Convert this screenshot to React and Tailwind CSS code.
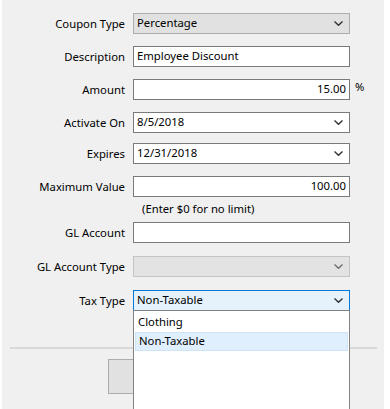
import React from "react";

const font = { fontFamily: '"Noto Sans", "Open Sans", sans-serif' };

function Chevron({ color = "#333" }) {
  return (
    <svg width="9" height="5" viewBox="0 0 9 5" className="shrink-0">
      <path d="M0.5 0.5 L4.5 4.3 L8.5 0.5" fill="none" stroke={color} strokeWidth="1.4" />
    </svg>
  );
}

function Row({ label, mt, children }) {
  return (
    <div className={`flex items-center ${mt}`}>
      <div className="w-[123px] text-right text-[11.3px] text-black leading-none">{label}</div>
      <div className="ml-[8px] flex items-center">{children}</div>
    </div>
  );
}

function TextBox({ value, right }) {
  return (
    <div
      className={`w-[217px] h-[21px] bg-white border border-[#7a7a7a] flex items-center px-[3px] text-[11.3px] text-black ${
        right ? "justify-end" : ""
      }`}
    >
      {value}
    </div>
  );
}

function Combo({ value, variant }) {
  const cls =
    variant === "gray"
      ? "bg-[#e1e1e1] border-[#adadad]"
      : variant === "disabled"
      ? "bg-[#e3e3e3] border-[#c4c4c4]"
      : variant === "focus"
      ? "bg-[#e5f1fb] border-[#0078d7]"
      : "bg-white border-[#7a7a7a]";
  return (
    <div className={`w-[217px] h-[21px] border ${cls} flex items-center justify-between pl-[3px] pr-[6px] text-[11.3px] text-black`}>
      <span>{value}</span>
      <Chevron color={variant === "disabled" ? "#6d6d6d" : "#333"} />
    </div>
  );
}

export default function App() {
  return (
    <div className="w-[390px] h-[409px] bg-white overflow-hidden" style={font}>
      <div className="ml-[2px] w-[382px] h-[409px] bg-[#f0f0f0] relative pt-[13px]">
        <Row label="Coupon Type" mt="mt-0">
          <Combo value="Percentage" variant="gray" />
        </Row>
        <Row label="Description" mt="mt-[12px]">
          <TextBox value="Employee Discount" />
        </Row>
        <Row label="Amount" mt="mt-[12px]">
          <TextBox value="15.00" right />
          <span className="ml-[5px] text-[11.3px] -mt-[4px]">%</span>
        </Row>
        <Row label="Activate On" mt="mt-[12px]">
          <Combo value="8/5/2018" />
        </Row>
        <Row label="Expires" mt="mt-[10px]">
          <Combo value="12/31/2018" />
        </Row>
        <Row label="Maximum Value" mt="mt-[12px]">
          <TextBox value="100.00" right />
        </Row>
        <div className="ml-[140px] mt-[4px] text-[11.3px] text-black leading-[16px]">(Enter $0 for no limit)</div>
        <Row label="GL Account" mt="mt-[5px]">
          <TextBox value="" />
        </Row>
        <Row label="GL Account Type" mt="mt-[13px]">
          <Combo value="" variant="disabled" />
        </Row>
        <Row label="Tax Type" mt="mt-[13px]">
          <Combo value="Non-Taxable" variant="focus" />
        </Row>
        <div className="mt-[36px] ml-[8px] w-[367px] h-[2px] bg-[#d9d9d9]" />
        <div className="mt-[10px] ml-[106px] w-[75px] h-[35px] bg-[#e1e1e1] border border-[#adadad]" />

        <div className="absolute left-[131px] top-[310px] w-[217px] h-[110px] bg-white border border-[#828282] text-[11.3px] text-black">
          <div className="h-[20px] flex items-center px-[4px] mt-[1px]">Clothing</div>
          <div className="mx-[1px] h-[19px] flex items-center px-[3px] bg-[#e0effd] border border-[#cde4f7]">Non-Taxable</div>
        </div>
      </div>
    </div>
  );
}
